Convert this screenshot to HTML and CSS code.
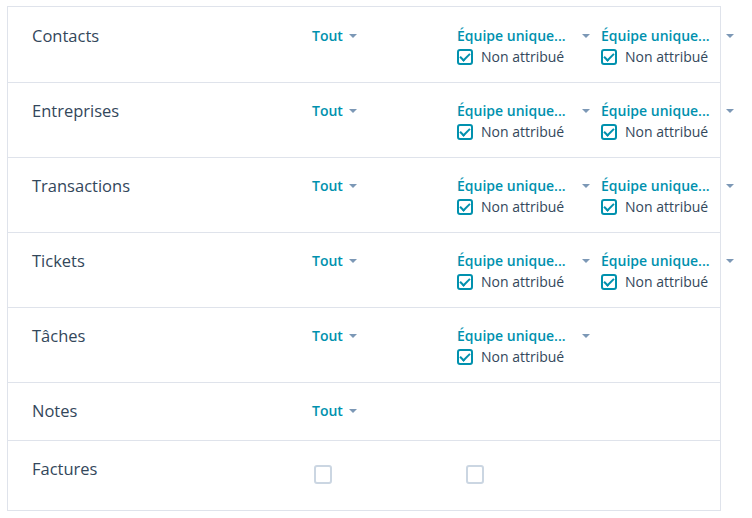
FILE: index.html
```html
<!DOCTYPE html>
<html lang="fr">
<head>
<meta charset="utf-8">
<link rel="stylesheet" href="styles.css">
</head>
<body>
<div class="table">
  <div class="row">
    <div class="label">Contacts</div>
    <div class="cell"><span class="dd">Tout<span class="caret"></span></span></div>
    <div class="cell"><span class="dd wide">Équipe unique...<span class="caret"></span></span><label class="chk"><span class="box on"></span>Non attribué</label></div>
    <div class="cell"><span class="dd wide">Équipe unique...<span class="caret"></span></span><label class="chk"><span class="box on"></span>Non attribué</label></div>
  </div>
  <div class="row">
    <div class="label">Entreprises</div>
    <div class="cell"><span class="dd">Tout<span class="caret"></span></span></div>
    <div class="cell"><span class="dd wide">Équipe unique...<span class="caret"></span></span><label class="chk"><span class="box on"></span>Non attribué</label></div>
    <div class="cell"><span class="dd wide">Équipe unique...<span class="caret"></span></span><label class="chk"><span class="box on"></span>Non attribué</label></div>
  </div>
  <div class="row">
    <div class="label">Transactions</div>
    <div class="cell"><span class="dd">Tout<span class="caret"></span></span></div>
    <div class="cell"><span class="dd wide">Équipe unique...<span class="caret"></span></span><label class="chk"><span class="box on"></span>Non attribué</label></div>
    <div class="cell"><span class="dd wide">Équipe unique...<span class="caret"></span></span><label class="chk"><span class="box on"></span>Non attribué</label></div>
  </div>
  <div class="row">
    <div class="label">Tickets</div>
    <div class="cell"><span class="dd">Tout<span class="caret"></span></span></div>
    <div class="cell"><span class="dd wide">Équipe unique...<span class="caret"></span></span><label class="chk"><span class="box on"></span>Non attribué</label></div>
    <div class="cell"><span class="dd wide">Équipe unique...<span class="caret"></span></span><label class="chk"><span class="box on"></span>Non attribué</label></div>
  </div>
  <div class="row">
    <div class="label">Tâches</div>
    <div class="cell"><span class="dd">Tout<span class="caret"></span></span></div>
    <div class="cell"><span class="dd wide">Équipe unique...<span class="caret"></span></span><label class="chk"><span class="box on"></span>Non attribué</label></div>
    <div class="cell"></div>
  </div>
  <div class="row short">
    <div class="label">Notes</div>
    <div class="cell"><span class="dd">Tout<span class="caret"></span></span></div>
    <div class="cell"></div>
    <div class="cell"></div>
  </div>
  <div class="row last">
    <div class="label">Factures</div>
    <div class="cell"><span class="box empty"></span></div>
    <div class="cell"><span class="box empty"></span></div>
    <div class="cell"></div>
  </div>
</div>
</body>
</html>
```
FILE: styles.css
```css
* { box-sizing: border-box; }
body {
  margin: 0;
  padding: 6px 0 0 7px;
  background: #fff;
  font-family: "Open Sans", "Liberation Sans", sans-serif;
  color: #33475b;
}
.table {
  width: 714px;
  border: 1px solid #dfe3eb;
}
.row {
  display: grid;
  grid-template-columns: 304px 145px 144px 1fr;
  height: 75px;
  border-bottom: 1px solid #dfe3eb;
}
.row:first-child { height: 76px; }
.row.short { height: 58px; }
.row.last { height: 69px; border-bottom: none; }
.label {
  padding: 17px 0 0 24px;
  font-size: 16.5px;
  line-height: 22px;
}
.row:first-child .label { padding-top: 18px; }
.cell {
  padding-top: 18px;
  display: flex;
  flex-direction: column;
  align-items: flex-start;
  white-space: nowrap;
}
.row:first-child .cell { padding-top: 19px; }
.row.last .cell { padding-top: 24px; }
.row.last .cell:nth-child(2) { padding-left: 2px; }
.row.last .cell:nth-child(3) { padding-left: 9px; }
.dd {
  display: flex;
  align-items: center;
  font-size: 14px;
  font-weight: 600;
  color: #0091ae;
  line-height: 20px;
}
.dd.wide { width: 133px; }
.caret {
  width: 0; height: 0;
  border-left: 4px solid transparent;
  border-right: 4px solid transparent;
  border-top: 4px solid #7c98b6;
  margin-left: 6px;
}
.dd.wide .caret { margin-left: auto; margin-right: 0; }
.chk {
  display: flex;
  align-items: center;
  font-size: 14px;
  line-height: 20px;
  margin-top: 1px;
}
.box {
  display: inline-block;
  width: 16px;
  height: 16px;
  border: 2px solid #0091ae;
  border-radius: 3px;
  margin-right: 8px;
  position: relative;
}
.box.on::after {
  content: "";
  position: absolute;
  left: 3px;
  top: 0px;
  width: 4px;
  height: 8px;
  border: solid #0091ae;
  border-width: 0 2px 2px 0;
  transform: rotate(45deg);
}
.box.empty {
  width: 18px;
  height: 19px;
  border: 2px solid #cbd6e2;
  margin-right: 0;
}
```
